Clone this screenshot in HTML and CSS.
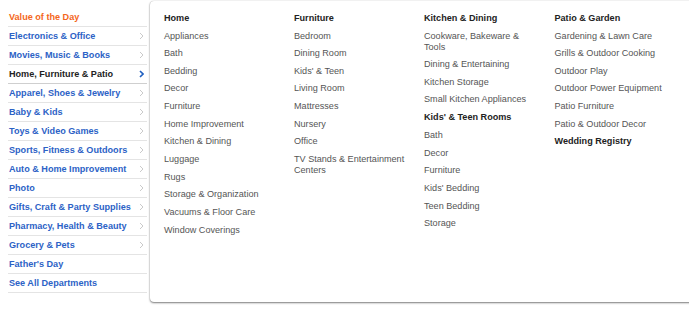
FILE: index.html
```html
<!DOCTYPE html>
<html>
<head>
<meta charset="utf-8">
<link rel="stylesheet" href="styles.css">
</head>
<body>
<div class="page">
  <ul class="nav">
    <li class="nav-row deal">Value of the Day</li>
    <li class="nav-row">Electronics &amp; Office<svg class="chev" viewBox="0 0 5 8"><polyline points="1,1 4,4 1,7"/></svg></li>
    <li class="nav-row">Movies, Music &amp; Books<svg class="chev" viewBox="0 0 5 8"><polyline points="1,1 4,4 1,7"/></svg></li>
    <li class="nav-row active">Home, Furniture &amp; Patio<svg class="chev" viewBox="0 0 5 8"><polyline points="1,1 4,4 1,7"/></svg></li>
    <li class="nav-row">Apparel, Shoes &amp; Jewelry<svg class="chev" viewBox="0 0 5 8"><polyline points="1,1 4,4 1,7"/></svg></li>
    <li class="nav-row">Baby &amp; Kids<svg class="chev" viewBox="0 0 5 8"><polyline points="1,1 4,4 1,7"/></svg></li>
    <li class="nav-row">Toys &amp; Video Games<svg class="chev" viewBox="0 0 5 8"><polyline points="1,1 4,4 1,7"/></svg></li>
    <li class="nav-row">Sports, Fitness &amp; Outdoors<svg class="chev" viewBox="0 0 5 8"><polyline points="1,1 4,4 1,7"/></svg></li>
    <li class="nav-row">Auto &amp; Home Improvement<svg class="chev" viewBox="0 0 5 8"><polyline points="1,1 4,4 1,7"/></svg></li>
    <li class="nav-row">Photo<svg class="chev" viewBox="0 0 5 8"><polyline points="1,1 4,4 1,7"/></svg></li>
    <li class="nav-row">Gifts, Craft &amp; Party Supplies<svg class="chev" viewBox="0 0 5 8"><polyline points="1,1 4,4 1,7"/></svg></li>
    <li class="nav-row">Pharmacy, Health &amp; Beauty<svg class="chev" viewBox="0 0 5 8"><polyline points="1,1 4,4 1,7"/></svg></li>
    <li class="nav-row">Grocery &amp; Pets<svg class="chev" viewBox="0 0 5 8"><polyline points="1,1 4,4 1,7"/></svg></li>
    <li class="nav-row">Father's Day</li>
    <li class="nav-row">See All Departments</li>
  </ul>
  <div class="flyout">
    <div class="col">
      <h3 class="head">Home</h3>
      <a class="item">Appliances</a>
      <a class="item">Bath</a>
      <a class="item">Bedding</a>
      <a class="item">Decor</a>
      <a class="item">Furniture</a>
      <a class="item">Home Improvement</a>
      <a class="item">Kitchen &amp; Dining</a>
      <a class="item">Luggage</a>
      <a class="item">Rugs</a>
      <a class="item">Storage &amp; Organization</a>
      <a class="item">Vacuums &amp; Floor Care</a>
      <a class="item">Window Coverings</a>
    </div>
    <div class="col">
      <h3 class="head">Furniture</h3>
      <a class="item">Bedroom</a>
      <a class="item">Dining Room</a>
      <a class="item">Kids' &amp; Teen</a>
      <a class="item">Living Room</a>
      <a class="item">Mattresses</a>
      <a class="item">Nursery</a>
      <a class="item">Office</a>
      <a class="item">TV Stands &amp; Entertainment Centers</a>
    </div>
    <div class="col">
      <h3 class="head">Kitchen &amp; Dining</h3>
      <a class="item">Cookware, Bakeware &amp; Tools</a>
      <a class="item">Dining &amp; Entertaining</a>
      <a class="item">Kitchen Storage</a>
      <a class="item">Small Kitchen Appliances</a>
      <h3 class="head">Kids' &amp; Teen Rooms</h3>
      <a class="item">Bath</a>
      <a class="item">Decor</a>
      <a class="item">Furniture</a>
      <a class="item">Kids' Bedding</a>
      <a class="item">Teen Bedding</a>
      <a class="item">Storage</a>
    </div>
    <div class="col">
      <h3 class="head">Patio &amp; Garden</h3>
      <a class="item">Gardening &amp; Lawn Care</a>
      <a class="item">Grills &amp; Outdoor Cooking</a>
      <a class="item">Outdoor Play</a>
      <a class="item">Outdoor Power Equipment</a>
      <a class="item">Patio Furniture</a>
      <a class="item">Patio &amp; Outdoor Decor</a>
      <h3 class="head">Wedding Registry</h3>
    </div>
  </div>
</div>
</body>
</html>
```

FILE: styles.css
```css
html, body {
  margin: 0;
  padding: 0;
  background: #fff;
  overflow: hidden;
}
body {
  font-family: "Liberation Sans", Arial, Helvetica, sans-serif;
  font-size: 9.1px;
}
.page {
  display: flex;
  align-items: flex-start;
  width: 100%;
  padding-bottom: 8px;
  overflow: hidden;
}
.nav {
  list-style: none;
  margin: 8px 0 0 8px;
  padding: 0;
  width: 139px;
  flex: none;
}
.nav-row {
  display: flex;
  align-items: center;
  justify-content: space-between;
  height: 18px;
  padding-left: 1px;
  border-bottom: 1px solid #e4e4e4;
  color: #2c62c6;
  font-weight: bold;
}
.nav-row.deal {
  color: #f4661b;
}
.nav-row.active {
  color: #222;
  border-bottom-color: #cfcfcf;
}
.chev {
  width: 5px;
  height: 8px;
  margin-right: 3px;
  fill: none;
  stroke: #c4c4c4;
  stroke-width: 0.9;
}
.active .chev {
  stroke: #1f5fc0;
  stroke-width: 1.6;
}
.flyout {
  flex: none;
  margin: 1px 0 0 3px;
  box-sizing: border-box;
  width: 580px;
  height: 301px;
  padding: 11.5px 0 0 14px;
  display: grid;
  grid-template-columns: 130px 130px 130.5px 130px;
  align-items: start;
  background: #fff;
  border-radius: 4px;
  box-shadow: 0 1px 2px rgba(0, 0, 0, 0.5), 0 0 1px rgba(0, 0, 0, 0.3);
}
.col {
  display: flex;
  flex-direction: column;
  padding-right: 15px;
}
.head {
  margin: 0 0 7px 0;
  font-size: 9.1px;
  line-height: 11px;
  font-weight: bold;
  color: #222;
}
.item {
  display: block;
  margin-bottom: 6.65px;
  line-height: 11px;
  color: #555;
  text-decoration: none;
}
```
